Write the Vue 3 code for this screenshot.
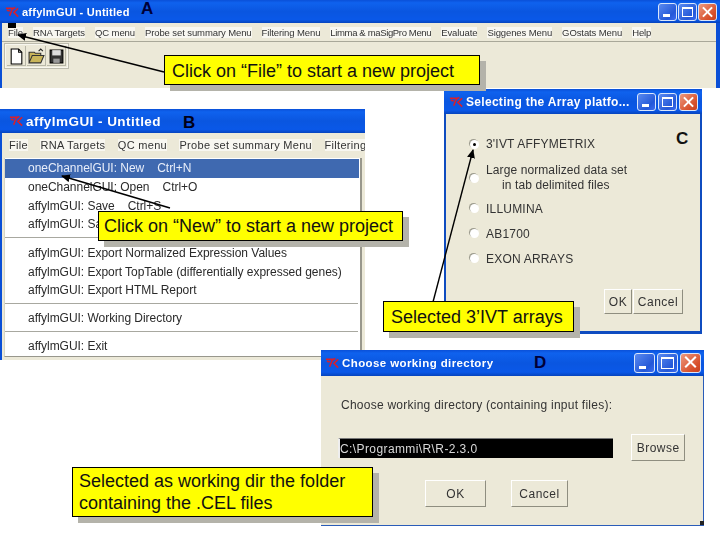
<script setup>
const menuA = ['File', 'RNA Targets', 'QC menu', 'Probe set summary Menu', 'Filtering Menu', 'Limma & maSigPro Menu', 'Evaluate', 'Siggenes Menu', 'GOstats Menu', 'Help']
const menuB = ['File', 'RNA Targets', 'QC menu', 'Probe set summary Menu', 'Filtering']
const drop = [
  [{ t: 'oneChannelGUI: New', k: 'Ctrl+N', on: true }, { t: 'oneChannelGUI: Open', k: 'Ctrl+O' }, { t: 'affylmGUI: Save', k: 'Ctrl+S' }, { t: 'affylmGUI: Save As', k: 'Ctrl+A' }],
  [{ t: 'affylmGUI: Export Normalized Expression Values' }, { t: 'affylmGUI: Export TopTable (differentially expressed genes)' }, { t: 'affylmGUI: Export HTML Report' }],
  [{ t: 'affylmGUI: Working Directory' }],
  [{ t: 'affylmGUI: Exit' }]
]
const btns = ['min', 'max', 'close']
</script>

<template>
  <div class="slide">
    <!-- Window A -->
    <section class="win win-a">
      <header class="title title-a">
        <svg class="tk" viewBox="0 0 16 12"><path d="M1 2h7L5 10M8 3l3-2M9 7l5-5M9 6l5 5M2 4l3 1" /></svg>
        <span class="title-text">affylmGUI - Untitled</span>
        <span class="wbtns">
          <i v-for="b in btns" :key="b" :class="['wb', b]"></i>
        </span>
      </header>
      <nav class="menu menu-a">
        <span v-for="m in menuA" :key="m">{{ m }}</span>
      </nav>
      <div class="toolbar">
        <span class="tool">
          <svg viewBox="0 0 16 16"><path d="M3 1h7l3 3v11H3z" fill="#fff" stroke="#000" /><path d="M10 1v3h3" fill="none" stroke="#000" /></svg>
        </span>
        <span class="tool">
          <svg viewBox="0 0 16 16"><path d="M1 14V4h5l1 1h5v2H4l-3 7h11l3-7H4" fill="#c9b55a" stroke="#333" /><path d="M10 3l2-2 2 2" fill="none" stroke="#222" /></svg>
        </span>
        <span class="tool">
          <svg viewBox="0 0 16 16"><path d="M2 2h12v12H2z" fill="#333" stroke="#000" /><path d="M4 2h8v5H4z" fill="#ddd" /><path d="M5 10h6v4H5z" fill="#999" /></svg>
        </span>
      </div>
    </section>

    <!-- Window B -->
    <section class="win win-b">
      <header class="title title-b">
        <svg class="tk" viewBox="0 0 16 12"><path d="M1 2h7L5 10M8 3l3-2M9 7l5-5M9 6l5 5M2 4l3 1" /></svg>
        <span class="title-text">affylmGUI - Untitled</span>
      </header>
      <nav class="menu menu-b">
        <span v-for="m in menuB" :key="m">{{ m }}</span>
      </nav>
      <div class="drop">
        <div v-for="(g, i) in drop" :key="i" class="group">
          <div v-for="r in g" :key="r.t" :class="['row', { on: r.on }]">
            <span>{{ r.t }}</span>
            <span v-if="r.k" class="key">{{ r.k }}</span>
          </div>
        </div>
      </div>
    </section>

    <!-- Window C -->
    <section class="win win-c">
      <header class="title title-c">
        <svg class="tk" viewBox="0 0 16 12"><path d="M1 2h7L5 10M8 3l3-2M9 7l5-5M9 6l5 5M2 4l3 1" /></svg>
        <span class="title-text">Selecting the Array platfo...</span>
        <span class="wbtns">
          <i v-for="b in btns" :key="b" :class="['wb', b]"></i>
        </span>
      </header>
      <div class="c-body">
        <div class="opt first"><i class="radio sel"></i><span>3'IVT AFFYMETRIX</span></div>
        <div class="opt two"><i class="radio"></i><span>Large normalized data set<br /><span class="ind">in tab delimited files</span></span></div>
        <div class="opt"><i class="radio"></i><span>ILLUMINA</span></div>
        <div class="opt"><i class="radio"></i><span>AB1700</span></div>
        <div class="opt"><i class="radio"></i><span>EXON ARRAYS</span></div>
        <div class="c-actions">
          <button class="btn ok-c">OK</button>
          <button class="btn cancel-c">Cancel</button>
        </div>
      </div>
    </section>

    <!-- Window D -->
    <section class="win win-d">
      <header class="title title-d">
        <svg class="tk" viewBox="0 0 16 12"><path d="M1 2h7L5 10M8 3l3-2M9 7l5-5M9 6l5 5M2 4l3 1" /></svg>
        <span class="title-text">Choose working directory</span>
        <span class="wbtns">
          <i v-for="b in btns" :key="b" :class="['wb', b]"></i>
        </span>
      </header>
      <div class="d-body">
        <p class="d-label">Choose working directory (containing input files):</p>
        <div class="d-line">
          <div class="entry">C:\Programmi\R\R-2.3.0</div>
          <button class="btn browse">Browse</button>
        </div>
        <div class="d-actions">
          <button class="btn ok-d">OK</button>
          <button class="btn cancel-d">Cancel</button>
        </div>
      </div>
      <i class="grip"></i>
    </section>

    <!-- Letters -->
    <b class="mark mark-a">A</b>
    <b class="mark mark-b">B</b>
    <b class="mark mark-c">C</b>
    <b class="mark mark-d">D</b>

    <!-- Arrows -->
    <svg class="arrows" viewBox="0 0 720 540">
      <defs>
        <marker id="head" markerWidth="9" markerHeight="8" refX="8" refY="4" orient="auto" markerUnits="userSpaceOnUse">
          <path d="M0 0L9 4L0 8z" fill="#000" />
        </marker>
      </defs>
      <rect x="8" y="23" width="8" height="5" fill="#000" />
      <line x1="164" y1="72" x2="18" y2="35" marker-end="url(#head)" />
      <line x1="170" y1="208" x2="62" y2="176" marker-end="url(#head)" />
      <line x1="433" y1="302" x2="473" y2="150" marker-end="url(#head)" />
    </svg>

    <!-- Callouts -->
    <div class="note note-1">Click on “File” to start a new project</div>
    <div class="note note-2">Click on “New” to start a new project</div>
    <div class="note note-3">Selected 3’IVT arrays</div>
    <div class="note note-4">Selected as working dir the folder<br />containing the .CEL files</div>
  </div>
</template>

<style>
html, body { margin: 0; background: #fff; }
</style>

<style scoped>
.slide {
  position: relative;
  width: 720px;
  height: 540px;
  overflow: hidden;
  background: #fff;
  font-family: "Liberation Sans", Arial, sans-serif;
  color: #222;
}
.win {
  position: absolute;
  display: flex;
  flex-direction: column;
  box-sizing: border-box;
  background: #ece9d8;
  filter: blur(0.35px);
}
.win-a { left: 0; top: 0; width: 720px; height: 88px; border-left: 2px solid #0a4fd6; border-right: 4px solid #0a4fd6; }
.win-b { left: 0; top: 109px; width: 365px; height: 251px; border-left: 2px solid #0a4fd6; background: #ece9d8; }
.win-c { left: 444px; top: 89px; width: 258px; height: 245px; border: solid #0f4cc0; border-width: 0 2px 3px 2px; }
.win-d { left: 321px; top: 350px; width: 383px; height: 176px; border-right: 1px solid #2a5cb8; border-bottom: 1px solid #2a5cb8; }

.title {
  display: flex;
  align-items: center;
  flex: none;
  background: linear-gradient(180deg, #0a50d8 0%, #0f62ee 12%, #0a56e0 50%, #0a58e8 85%, #0644bd 100%);
  color: #fff;
  font-family: "Liberation Sans", Arial, sans-serif;
  font-weight: 700;
}
.title-a { height: 23px; margin: 0 -4px 0 -2px; padding-left: 5px; font-size: 11px; }
.title-b { height: 24px; margin-left: -2px; padding-left: 9px; font-size: 13.5px; }
.title-c { height: 25px; margin: 0 -2px; padding-left: 5px; font-size: 12px; }
.title-d { height: 26px; margin-right: -1px; padding-left: 4px; font-size: 11.5px; }
.title-text { margin-left: 2px; white-space: nowrap; }
.title-a .title-text { letter-spacing: 0.25px; }
.title-b .title-text { letter-spacing: 0.45px; }
.title-c .title-text { letter-spacing: 0.3px; }
.title-d .title-text { letter-spacing: 0.4px; }
.tk {
  width: 15px;
  height: 12px;
  flex: none;
  fill: none;
  stroke: #d8202c;
  stroke-width: 1.7;
}
.wbtns { display: flex; gap: 1px; margin-left: auto; margin-right: 3px; }
.title-c .wbtns { gap: 2px; margin-right: 4px; }
.title-d .wbtns { gap: 2px; margin-right: 3px; }
.wb {
  position: relative;
  display: block;
  width: 19px;
  height: 18px;
  box-sizing: border-box;
  border: 1px solid #d9e6fb;
  border-radius: 3px;
  background: linear-gradient(135deg, #5a8af0, #2458d8 70%, #3c6cf0);
}
.title-d .wb { width: 21px; height: 20px; }
.wb.close { background: linear-gradient(135deg, #ec9a80, #d8512c 70%, #c84020); }
.wb.min::after { content: ""; position: absolute; left: 4px; bottom: 3px; width: 7px; height: 3px; background: #fff; }
.wb.max::after { content: ""; position: absolute; left: 3px; top: 3px; right: 3px; bottom: 3px; border: 1px solid #fff; border-top-width: 2px; }
.wb.close::before, .wb.close::after {
  content: "";
  position: absolute;
  left: 2px;
  right: 2px;
  top: 7px;
  height: 2px;
  background: #fff;
  transform: rotate(45deg);
}
.wb.close::after { transform: rotate(-45deg); }

.menu { display: flex; flex: none; align-items: center; white-space: nowrap; overflow: hidden; }
.menu span { background: #f8f7f1; }
.menu-a {
  height: 18px;
  padding-left: 6px;
  gap: 10px;
  border-bottom: 1px solid #a9a899;
  font-size: 9.5px;
  letter-spacing: -0.1px;
  color: #333;
}
.menu-a span:nth-child(6) { letter-spacing: -0.35px; }
.menu-b {
  height: 24px;
  padding-left: 7px;
  gap: 12.5px;
  font-size: 11px;
  letter-spacing: 0.3px;
  color: #333;
}
.toolbar {
  display: flex;
  align-self: flex-start;
  gap: 1px;
  margin: 1px 0 0 2px;
  padding: 2px;
  height: 26px;
  box-sizing: border-box;
  border: 1px solid #bdbcae;
  box-shadow: inset 0 0 0 1px #f8f7ef;
}
.tool { display: flex; align-items: center; justify-content: center; width: 19px; box-shadow: inset -1px -1px 0 #b8b7a8; }
.tool svg { width: 17px; height: 17px; }

.drop {
  margin: 1px 3px 0 2px;
  padding-top: 1px;
  background: #fff;
  border-left: 1px solid #d8d6c6;
  border-right: 2px solid #98978c;
  border-bottom: 1px solid #98978c;
  font-size: 12px;
  letter-spacing: -0.03px;
  color: #2a2a2a;
}
.group + .group { position: relative; padding-top: 10px; }
.group + .group + .group { padding-top: 9.4px; }
.group + .group::before {
  content: "";
  position: absolute;
  left: 0;
  right: 2px;
  top: 3.5px;
  border-top: 1px solid #a8a8a0;
}
.row { display: flex; align-items: center; height: 18.67px; padding-left: 23px; white-space: nowrap; }
.row.on { background: #3f69b0; color: #e8eefa; margin-right: 1px; }
.key { margin-left: 13px; }

.c-body { position: relative; flex: 1; padding: 20px 0 0 24px; font-size: 12px; letter-spacing: 0.2px; color: #333; }
.opt { display: flex; align-items: center; height: 25px; gap: 7px; }
.opt.first { height: 20px; }
.opt.two { height: 36px; margin-top: 6px; line-height: 15.5px; letter-spacing: 0.1px; }
.ind { margin-left: 16px; }
.radio {
  flex: none;
  position: relative;
  width: 9px;
  height: 9px;
  border-radius: 50%;
  background: #fff;
  box-shadow: -1px -1px 0 #9d9c8f;
}
.radio.sel::after { content: ""; position: absolute; left: 3px; top: 3px; width: 3px; height: 3px; border-radius: 50%; background: #000; }
.btn {
  display: block;
  box-sizing: border-box;
  padding: 0;
  border: 1px solid;
  border-color: #fff #8f8e80 #8f8e80 #fff;
  background: #ece9d8;
  font: inherit;
  font-size: 12px;
  letter-spacing: 0.5px;
  color: #333;
}
.c-actions { position: absolute; right: 17px; top: 175px; display: flex; gap: 1px; }
.ok-c { width: 28px; height: 25px; }
.cancel-c { width: 50px; height: 25px; }

.d-body { display: flex; flex-direction: column; flex: 1; padding: 0 18px 0 17px; font-size: 12px; letter-spacing: 0.25px; color: #333; }
.d-label { margin: 22px 0 0 3px; height: 15px; line-height: 15px; white-space: nowrap; }
.d-line { display: flex; align-items: center; margin-top: 21px; gap: 18px; }
.entry {
  width: 277px;
  height: 20px;
  box-sizing: border-box;
  border-top: 1px solid #777;
  border-left: 2px solid #eee;
  padding-left: 0;
  line-height: 20px;
  background: #000;
  color: #d8d8d8;
  letter-spacing: 0.4px;
}
.browse { width: 54px; height: 27px; }
.d-actions { display: flex; gap: 25px; margin: 19px 0 0 87px; }
.ok-d { width: 61px; height: 27px; }
.cancel-d { width: 57px; height: 27px; }
.grip { position: absolute; right: -1px; bottom: 0; width: 4px; height: 4px; background: #222; }

.mark { position: absolute; font-size: 17px; line-height: 16px; font-weight: 700; color: #000038; }
.mark-a { left: 141px; top: 1px; }
.mark-b { left: 183px; top: 115px; color: #000018; }
.mark-c { left: 676px; top: 131px; color: #111; }
.mark-d { left: 534px; top: 355px; }

.arrows { position: absolute; left: 0; top: 0; width: 720px; height: 540px; pointer-events: none; }
.arrows line { stroke: #000; stroke-width: 1.4; }

.note {
  position: absolute;
  box-sizing: border-box;
  padding-left: 7px;
  border: 1px solid #000;
  background: #ffff00;
  box-shadow: 6px 6px 0 #b4b3aa;
  color: #111;
  font-size: 18px;
  white-space: nowrap;
}
.note-1 { left: 164px; top: 55px; width: 316px; height: 30px; line-height: 30px; }
.note-2 { left: 98px; top: 211px; width: 305px; height: 30px; line-height: 28px; padding-left: 5px; }
.note-3 { left: 383px; top: 301px; width: 191px; height: 31px; line-height: 30px; }
.note-4 { left: 72px; top: 467px; width: 301px; height: 50px; line-height: 22px; padding-top: 2px; padding-left: 6px; }
</style>
